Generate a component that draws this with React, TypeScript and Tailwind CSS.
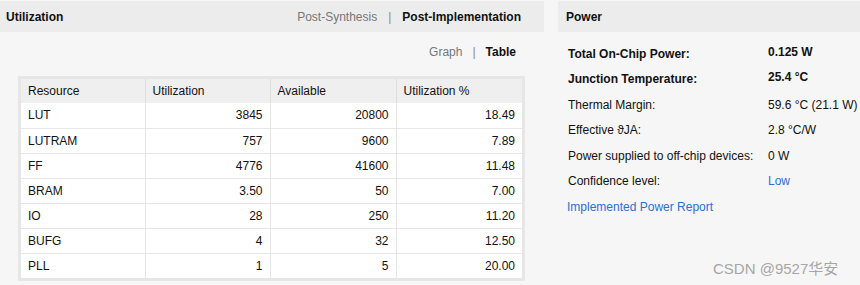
const font = { fontFamily: '"Liberation Sans", Arial, "Noto Sans CJK SC", sans-serif' };

const rows = [
  ["LUT", "3845", "20800", "18.49"],
  ["LUTRAM", "757", "9600", "7.89"],
  ["FF", "4776", "41600", "11.48"],
  ["BRAM", "3.50", "50", "7.00"],
  ["IO", "28", "250", "11.20"],
  ["BUFG", "4", "32", "12.50"],
  ["PLL", "1", "5", "20.00"],
];

const power: { label: string; value: string; bold?: boolean; link?: boolean }[] = [
  { label: "Total On-Chip Power:", value: "0.125 W", bold: true },
  { label: "Junction Temperature:", value: "25.4 °C", bold: true },
  { label: "Thermal Margin:", value: "59.6 °C (21.1 W)" },
  { label: "Effective \u03D1JA:", value: "2.8 °C/W" },
  { label: "Power supplied to off-chip devices:", value: "0 W" },
  { label: "Confidence level:", value: "Low", link: true },
];

export default function App() {
  return (
    <div style={font} className="relative flex w-[860px] h-[285px] bg-[#f6f6f6] text-[12px] text-[#111] overflow-hidden">
      {/* Utilization */}
      <div className="w-[544px] pt-px">
        <div className="h-[31px] bg-[#ececec] flex items-center justify-between pl-1.5 pr-[23px]">
          <span className="font-bold">Utilization</span>
          <div className="flex items-center">
            <span className="text-[#777]">Post-Synthesis</span>
            <span className="text-[#888] mx-[11px]">|</span>
            <span className="font-bold">Post-Implementation</span>
          </div>
        </div>
        <div className="h-11 flex items-center justify-end pr-[28px] pb-1">
          <span className="text-[#777]">Graph</span>
          <span className="text-[#888] mx-[10px]">|</span>
          <span className="font-bold">Table</span>
        </div>
        <div className="ml-[18px] w-[507px] border-[3px] border-[#e6e6e6]">
          <table className="w-full table-fixed border-collapse">
            <colgroup>
              <col className="w-[124px]" />
              <col className="w-[125px]" />
              <col className="w-[126px]" />
              <col />
            </colgroup>
            <thead>
              <tr className="h-[24px] bg-[#efefef]">
                {["Resource", "Utilization", "Available", "Utilization %"].map((h, i) => (
                  <th key={h} className={`font-normal text-left px-[7px] ${i < 3 ? "border-r border-[#dedede]" : ""}`}>
                    {h}
                  </th>
                ))}
              </tr>
            </thead>
            <tbody>
              {rows.map((r, ri) => (
                <tr key={r[0]} className={`h-[25px] bg-white ${ri > 0 ? "border-t border-[#e6e6e6]" : ""}`}>
                  {r.map((c, i) => (
                    <td
                      key={i}
                      className={`px-[7px] ${i === 0 ? "text-left" : "text-right"} ${i < 3 ? "border-r border-[#e6e6e6]" : ""}`}
                    >
                      {c}
                    </td>
                  ))}
                </tr>
              ))}
            </tbody>
          </table>
        </div>
      </div>

      {/* Power */}
      <div className="ml-[14px] flex-1 pt-px">
        <div className="h-[31px] bg-[#ececec] flex items-center pl-2">
          <span className="font-bold">Power</span>
        </div>
        <div className="pl-2.5 pt-[9px]">
          {power.map((p) => (
            <div key={p.label} className="flex h-[25.5px] items-center">
              <span className={`w-[200px] shrink-0 ${p.bold ? "font-bold" : ""}`}>{p.label}</span>
              <span
                className={`whitespace-nowrap ${p.bold ? "font-bold -mt-[4px]" : ""} ${p.link ? "text-[#2d6fd9]" : ""}`}
              >
                {p.value}
              </span>
            </div>
          ))}
          <div className="h-[25px] flex items-center -ml-px text-[#2d6fd9]">Implemented Power Report</div>
        </div>
      </div>

      <div className="absolute left-[713px] top-[258px] text-[15px] text-[#a6a6a6]">CSDN @9527华安</div>
    </div>
  );
}
